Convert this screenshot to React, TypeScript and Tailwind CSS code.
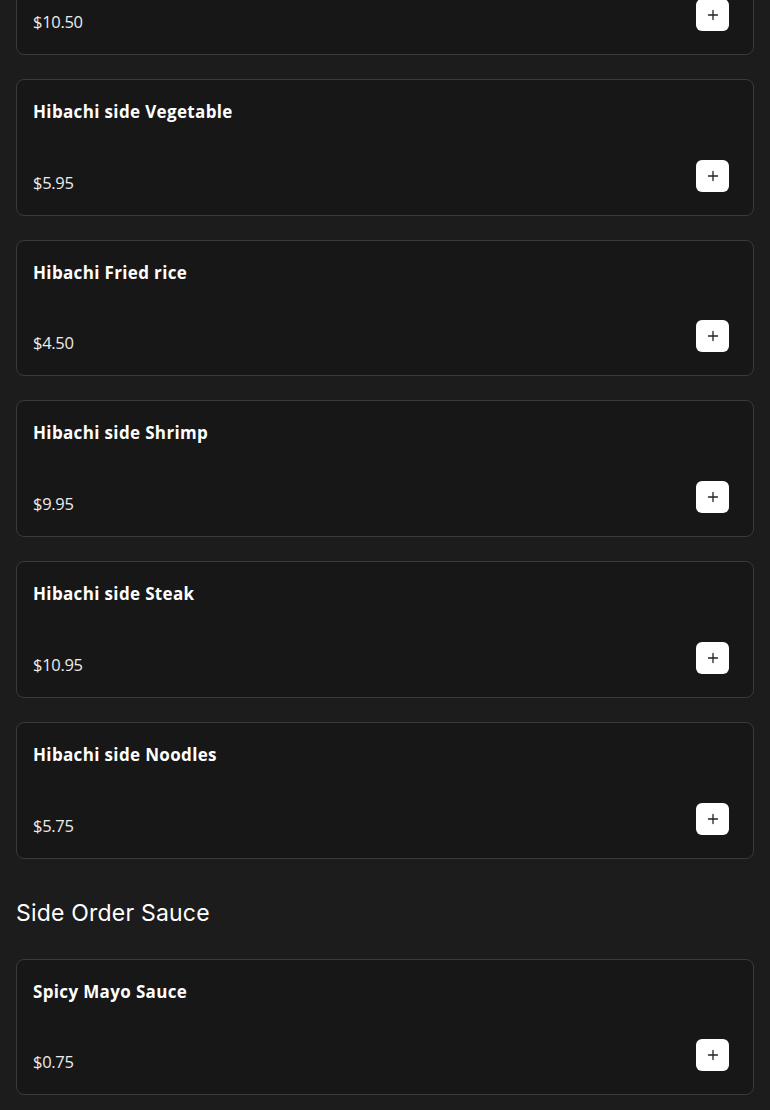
import React from "react";

type Item = { name: string; price: string };

const sides: Item[] = [
  { name: "Hibachi side Chicken", price: "$10.50" },
  { name: "Hibachi side Vegetable", price: "$5.95" },
  { name: "Hibachi Fried rice", price: "$4.50" },
  { name: "Hibachi side Shrimp", price: "$9.95" },
  { name: "Hibachi side Steak", price: "$10.95" },
  { name: "Hibachi side Noodles", price: "$5.75" },
];

const sauces: Item[] = [{ name: "Spicy Mayo Sauce", price: "$0.75" }];

function PlusIcon() {
  return (
    <svg width="12" height="12" viewBox="0 0 12 12" fill="none" stroke="#222" strokeWidth="1.3" strokeLinecap="round">
      <path d="M6 1.5v9M1.5 6h9" />
    </svg>
  );
}

function Card({ item }: { item: Item }) {
  return (
    <div className="h-[136.75px] rounded-lg border border-[#3a3a3a] bg-[#171717] p-4 flex flex-col justify-between">
      <div
        className="pt-[2px] text-[17px] leading-7 font-bold text-white tracking-[0.35px]"
        style={{ fontFamily: '"Open Sans", "Noto Sans", sans-serif' }}
      >
        {item.name}
      </div>
      <div className="flex items-end justify-between">
        <span
          className="text-[16.5px] leading-7 text-[#ececec] pb-[2px] tracking-[-0.3px]"
          style={{ fontFamily: '"Open Sans", "Noto Sans", sans-serif' }}
        >
          {item.price}
        </span>
        <button className="w-[33px] h-[32px] mb-[7px] mr-[8px] rounded-md bg-white flex items-center justify-center">
          <PlusIcon />
        </button>
      </div>
    </div>
  );
}

export default function App() {
  return (
    <div className="min-h-[1110px] bg-[#1c1c1c] overflow-hidden">
      <div className="px-4 mt-[-82px] flex flex-col gap-6">
        {sides.map((s) => (
          <Card key={s.name} item={s} />
        ))}
      </div>
      <h2
        className="px-4 mt-[38px] mb-[30px] text-[23px] leading-8 text-white tracking-[0.2px]"
        style={{ fontFamily: 'Inter, "Noto Sans", sans-serif' }}
      >
        Side Order Sauce
      </h2>
      <div className="px-4 flex flex-col gap-6">
        {sauces.map((s) => (
          <Card key={s.name} item={s} />
        ))}
      </div>
    </div>
  );
}
